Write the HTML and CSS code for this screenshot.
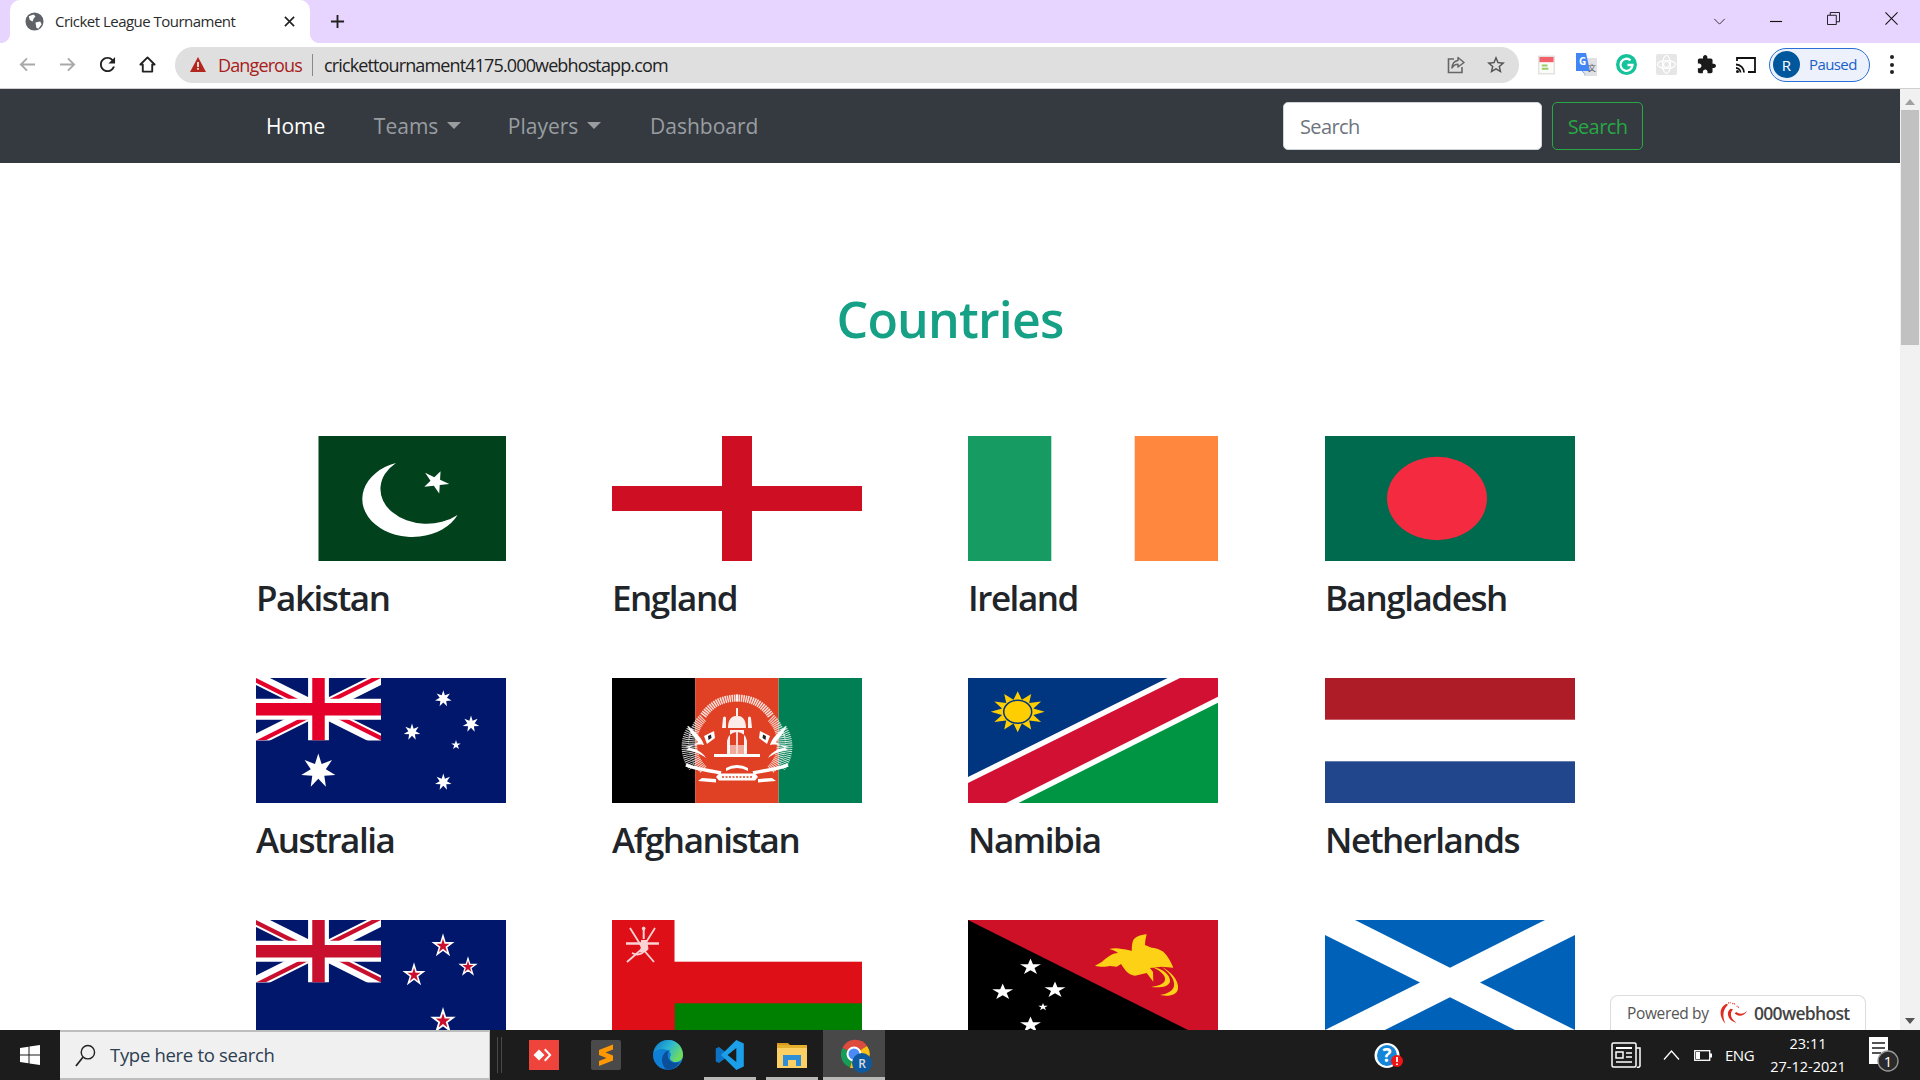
FILE: index.html
```html
<!DOCTYPE html>
<html lang="en">
<head>
<meta charset="utf-8">
<title>Cricket League Tournament</title>
<link rel="stylesheet" href="styles.css">
</head>
<body>
<svg class="defs" aria-hidden="true">
  <defs>
    <polygon id="s5" points="0,-1 .2245,-.309 .951,-.309 .363,.118 .588,.809 0,.382 -.588,.809 -.363,.118 -.951,-.309 -.2245,-.309"/>
    <polygon id="s7" points="0,-1 .191,-.396 .782,-.623 .429,-.098 .975,.223 .344,.275 .434,.901 0,.44 -.434,.901 -.344,.275 -.975,.223 -.429,-.098 -.782,-.623 -.191,-.396"/>
    <clipPath id="ujt"><path d="M30,15h30v15zv15h-30zh-30v-15zv-15h30z"/></clipPath>
    <filter id="soft" x="-5%" y="-5%" width="110%" height="110%"><feGaussianBlur stdDeviation=".35"/></filter>
    <symbol id="uj" viewBox="0 0 60 30" preserveAspectRatio="none">
      <path d="M0,0 60,30M60,0 0,30" stroke="#fff" stroke-width="6"/>
      <path d="M0,0 60,30M60,0 0,30" stroke="#e4002b" stroke-width="4" clip-path="url(#ujt)"/>
      <path d="M30,0v30M0,15h60" stroke="#fff" stroke-width="10"/>
      <path d="M30,0v30M0,15h60" stroke="#e4002b" stroke-width="6"/>
    </symbol>
    <symbol id="ujn" viewBox="0 0 60 30" preserveAspectRatio="none">
      <path d="M0,0 60,30M60,0 0,30" stroke="#fff" stroke-width="6"/>
      <path d="M0,0 60,30M60,0 0,30" stroke="#c8102e" stroke-width="4" clip-path="url(#ujt)"/>
      <path d="M30,0v30M0,15h60" stroke="#fff" stroke-width="10"/>
      <path d="M30,0v30M0,15h60" stroke="#c8102e" stroke-width="6"/>
    </symbol>
    <g id="emb-half">
      <path d="M126 20C108 20 98 28 91 38" fill="none" stroke="#fff" stroke-width="7" stroke-dasharray="1.500 .8" opacity=".85"/>
      <path d="M91 40C78 52 76 78 92 92" fill="none" stroke="#fff" stroke-width="9" stroke-dasharray="1.200 .8" opacity=".75"/>
      <path d="M79 50C71 60 71 78 80 90" fill="none" stroke="#fff" stroke-width="7" stroke-dasharray="1 1" opacity=".8"/>
      <path d="M75 48C84 54 90 60 92 67C86 66 80 67 73 69C82 70 90 73 94 80C88 75 78 72 74 72C78 69 84 66 86 64C82 59 78 54 75 48z" fill="#fff"/>
      <path d="M92 58 102 53 103 60 95 66z" fill="#fff"/>
      <path d="M96 58 99 56.500 99.500 60 96.500 62z" fill="#222"/>
      <path d="M74 87C86 92 98 92 109 95" fill="none" stroke="#fff" stroke-width="3.500"/>
      <path d="M86 103 104 104.500 104 101 90 100z" fill="#fff"/>
      <path d="M110 50h4V40a1.500 1.500 0 0 0-3 0z M108 52h10v24h-3V63a10 10 0 0 1 10-9v-2z" fill="#fff" opacity=".92"/>
      <path d="M124 54h2v22h-10v-9h8z" fill="#fff" opacity=".55"/>
      <path d="M124 38c-6 0-8 6-8 12h9V38zM124 30h1.500v8H124z" fill="#fff" opacity=".9"/>
      <path d="M102 76h23v3h-23z" fill="#fff"/>
      <path d="M114 90q5-3 11-3v3q-6 0-11 3z" fill="#fff"/>
    </g>
  </defs>
</svg>

<header class="chrome">
  <div class="tabstrip">
    <div class="tab">
      <svg class="globe" viewBox="0 0 20 20"><circle cx="10" cy="10" r="9.5" fill="#5f6368"/><path d="M4 4.5 9 2.5l2 2-2 2.5-1 3-3-1.5zM11 11l5-1 1.5 3-3.5 4.500-2-1z" fill="#fff"/></svg>
      <span class="tab-title">Cricket League Tournament</span>
      <svg class="tab-x" viewBox="0 0 12 12"><path d="M1 1l10 10M11 1 1 11" stroke="#222" stroke-width="1.800"/></svg>
    </div>
    <svg class="newtab" viewBox="0 0 16 16"><path d="M8 1v14M1 8h14" stroke="#222" stroke-width="2"/></svg>
    <div class="grow"></div>
    <svg class="win win-chev" viewBox="0 0 14 8"><path d="M1 1l6 6 6-6" fill="none" stroke="#333" stroke-width="1.100"/></svg>
    <svg class="win win-min" viewBox="0 0 14 14"><path d="M0 7h13" stroke="#111" stroke-width="1.200"/></svg>
    <svg class="win win-max" viewBox="0 0 14 14"><path d="M.5 3.500h9.500v10H.5zM3.500 3.500V.5h10v10H10" fill="none" stroke="#111" stroke-width="1"/></svg>
    <svg class="win win-close" viewBox="0 0 14 14"><path d="M.5.5l13 13M13.500.5l-13 13" stroke="#111" stroke-width="1.100"/></svg>
  </div>
  <div class="toolbar">
    <svg class="tb tb-back" viewBox="0 0 18 16"><path d="M17 8H2M8.500 1.500 2 8l6.500 6.500" fill="none" stroke="#a9a9a9" stroke-width="2"/></svg>
    <svg class="tb tb-fwd" viewBox="0 0 18 16"><path d="M1 8h15M9.500 1.500 16 8l-6.500 6.500" fill="none" stroke="#a9a9a9" stroke-width="2"/></svg>
    <svg class="tb tb-reload" viewBox="3 3 18 18"><path fill="#222" d="M17.650 6.350C16.200 4.900 14.210 4 12 4c-4.420 0-7.990 3.580-7.990 8s3.570 8 7.990 8c3.730 0 6.840-2.550 7.730-6h-2.080c-.82 2.330-3.040 4-5.650 4-3.310 0-6-2.690-6-6s2.690-6 6-6c1.660 0 3.140.69 4.220 1.780L13 11h7V4l-2.350 2.350z"/></svg>
    <svg class="tb tb-home" viewBox="0 0 18 18"><path d="M9 1.500 1.500 9H4v7.500h10V9h2.500z" fill="none" stroke="#222" stroke-width="2" stroke-linejoin="round"/></svg>
    <div class="omnibox">
      <svg class="warn" viewBox="0 0 16 15"><path d="M8 0 16 15H0z" fill="#b3261e"/><path d="M7.200 5h1.600v5H7.200zM7.200 11h1.600v1.800H7.200z" fill="#fff"/></svg>
      <span class="danger">Dangerous</span>
      <span class="omni-sep"></span>
      <span class="url">crickettournament4175.000webhostapp.com</span>
      <div class="grow"></div>
      <svg class="omni-i i-share" viewBox="0 0 18 18"><path d="M7 3H1.500v13.500H15V11" fill="none" stroke="#666" stroke-width="1.600"/><path d="M11 1.500 17 6.500 11 11V8.200C8 8.200 6.300 9.500 5 12c.2-4 2.500-7 6-7.500z" fill="none" stroke="#666" stroke-width="1.500" stroke-linejoin="round"/></svg>
      <svg class="omni-i i-star" viewBox="2 2 20 20"><path fill="#555" d="M22 9.240l-7.190-.62L12 2 9.190 8.630 2 9.240l5.460 4.730L5.820 21 12 17.270 18.180 21l-1.630-7.030L22 9.240zM12 15.400l-3.760 2.270 1-4.280-3.320-2.880 4.380-.38L12 6.100l1.710 4.040 4.380.38-3.320 2.880 1 4.280L12 15.400z"/></svg>
    </div>
    <svg class="ext ext-cal" viewBox="0 0 18 20"><rect width="18" height="20" fill="#e4e2de"/><rect x="1.500" y="1.500" width="15" height="17" fill="#fbfbf8"/><rect x="1.500" y="1.500" width="15" height="5.500" fill="#f2616a"/><path d="M4 10.500h6M4 14h7" stroke="#9ccc65" stroke-width="2.200"/></svg>
    <svg class="ext ext-tr" viewBox="0 0 21 24"><path d="M8 5h13v18H8z" fill="#dfe1e5"/><path d="M0 0h10l4 18H7l3 5-4-5H0z" fill="#4285f4"/><text class="ext-g" x="3" y="12">G</text><text class="ext-zh" x="12" y="18">文</text></svg>
    <svg class="ext ext-gr" viewBox="0 0 21 21"><circle cx="10.500" cy="10.500" r="10.500" fill="#15c39a"/><path d="M14.500 6.300A6 6 0 1 0 16.500 11h-5" fill="none" stroke="#fff" stroke-width="2.300"/></svg>
    <svg class="ext ext-gy" viewBox="0 0 21 21"><rect width="21" height="21" rx="2" fill="#e6e6e6"/><g fill="none" stroke="#fff" stroke-width="1.200"><circle cx="10.500" cy="10.500" r="3"/><ellipse cx="10.500" cy="10.500" rx="9" ry="4"/><ellipse cx="10.500" cy="10.500" rx="4" ry="9"/></g></svg>
    <svg class="ext ext-pz" viewBox="1 1 22 22"><path fill="#1a1a1a" d="M20.500 11H19V7c0-1.100-.9-2-2-2h-4V3.500C13 2.120 11.880 1 10.500 1S8 2.120 8 3.500V5H4c-1.100 0-1.990.9-1.990 2v3.800H3.500c1.490 0 2.700 1.210 2.700 2.700s-1.210 2.700-2.700 2.700H2V20c0 1.100.9 2 2 2h3.800v-1.500c0-1.490 1.210-2.700 2.700-2.700 1.490 0 2.700 1.210 2.700 2.700V22H17c1.100 0 2-.9 2-2v-4h1.500c1.380 0 2.500-1.120 2.500-2.500S21.880 11 20.500 11z"/></svg>
    <svg class="ext ext-cast" viewBox="0 0 20 16"><path d="M1 4V1h18v14h-7" fill="none" stroke="#111" stroke-width="1.800"/><path d="M0 7.500a8 8 0 0 1 8 8M0 11a4.500 4.500 0 0 1 4.500 4.500" fill="none" stroke="#111" stroke-width="1.800"/><circle cx="1.500" cy="14.500" r="1.500" fill="#111"/></svg>
    <div class="pill"><span class="avatar">R</span><span class="paused">Paused</span></div>
    <span class="kebab"><i></i><i></i><i></i></span>
  </div>
</header>

<div class="viewport">
  <div class="page">
    <nav class="navbar">
      <div class="nav-inner">
        <a class="nav-link active">Home</a>
        <a class="nav-link caret nl-teams">Teams</a>
        <a class="nav-link caret nl-players">Players</a>
        <a class="nav-link nl-dash">Dashboard</a>
        <form class="search">
          <input class="search-input" placeholder="Search">
          <button class="search-btn" type="button">Search</button>
        </form>
      </div>
    </nav>
    <main class="container">
      <h1 class="title">Countries</h1>
      <div class="grid">
        <article class="card">
          <svg class="flag" viewBox="0 0 250 125"><rect x="62.500" width="187.500" height="125" fill="#01411c"/><path d="M140 27A50 38 0 1 0 201.600 79A46 34.500 0 1 1 140 27z" fill="#fff"/><use href="#s5" fill="#fff" transform="translate(179.700 45.700) rotate(25) scale(14 11.500)"/></svg>
          <h2 class="name">Pakistan</h2>
        </article>
        <article class="card">
          <svg class="flag" viewBox="0 0 250 125"><path d="M110 0h30v50h110v25H140v50h-30V75H0V50h110z" fill="#ce0e22"/></svg>
          <h2 class="name">England</h2>
        </article>
        <article class="card">
          <svg class="flag" viewBox="0 0 250 125"><rect width="83.300" height="125" fill="#169b62"/><rect x="166.700" width="83.300" height="125" fill="#ff883e"/></svg>
          <h2 class="name">Ireland</h2>
        </article>
        <article class="card">
          <svg class="flag" viewBox="0 0 250 125"><rect width="250" height="125" fill="#006a4e"/><ellipse cx="112" cy="62.500" rx="50" ry="41.700" fill="#f42a41"/></svg>
          <h2 class="name">Bangladesh</h2>
        </article>

        <article class="card">
          <svg class="flag" viewBox="0 0 250 125"><rect width="250" height="125" fill="#00176b"/><use href="#uj" width="125" height="62.500"/><g fill="#fff"><use href="#s7" transform="translate(62.300 93) scale(17.500)"/><use href="#s7" transform="translate(187.300 20.700) scale(8.500)"/><use href="#s7" transform="translate(156 54) scale(8.500)"/><use href="#s7" transform="translate(215 46) scale(8.500)"/><use href="#s5" transform="translate(200 67) scale(5)"/><use href="#s7" transform="translate(187.300 104) scale(8.500)"/></g></svg>
          <h2 class="name">Australia</h2>
        </article>
        <article class="card">
          <svg class="flag" viewBox="0 0 250 125"><rect width="83.300" height="125"/><rect x="83.300" width="83.300" height="125" fill="#e04023"/><rect x="166.700" width="83.300" height="125" fill="#007f54"/>
            <g filter="url(#soft)">
              <use href="#emb-half"/>
              <use href="#emb-half" transform="translate(250 0) scale(-1 1)"/>
              <path d="M107 95.500h36l3 3.500-3 3.500h-36l-3-3.500z" fill="#fff"/>
              <path d="M110 99h30" stroke="#e04023" stroke-width="1.600" stroke-dasharray="2 1.500"/>
            </g>
          </svg>
          <h2 class="name">Afghanistan</h2>
        </article>
        <article class="card">
          <svg class="flag" viewBox="0 0 250 125"><path d="M0 0h199.600L0 99z" fill="#003580"/><path d="M212 0h38v18.700L38 125H0v-20z" fill="#d21034"/><path d="M250 24.700V125H50.500z" fill="#009543"/><polygon fill="#ffce00" transform="translate(49.700 33.700) scale(27 20.500)" points="0,-1 .155,-.58 .5,-.866 .424,-.424 .866,-.5 .58,-.155 1,0 .58,.155 .866,.5 .424,.424 .5,.866 .155,.58 0,1 -.155,.58 -.5,.866 -.424,.424 -.866,.5 -.58,.155 -1,0 -.58,-.155 -.866,-.5 -.424,-.424 -.5,-.866 -.155,-.58"/><ellipse cx="49.700" cy="33.700" rx="14" ry="11.500" fill="#ffce00" stroke="#003580" stroke-width="1.500"/></svg>
          <h2 class="name">Namibia</h2>
        </article>
        <article class="card">
          <svg class="flag" viewBox="0 0 250 125"><rect width="250" height="41.700" fill="#ae1c28"/><rect y="83.300" width="250" height="41.700" fill="#21468b"/></svg>
          <h2 class="name">Netherlands</h2>
        </article>

        <article class="card">
          <svg class="flag" viewBox="0 0 250 125"><rect width="250" height="125" fill="#00176b"/><use href="#ujn" width="125" height="62.500"/><g fill="#c8102e" stroke="#fff" stroke-width=".17"><use href="#s5" transform="translate(187 26) scale(9.500 10)"/><use href="#s5" transform="translate(158 55) scale(9.500 10)"/><use href="#s5" transform="translate(212 47) scale(8 8.500)"/><use href="#s5" transform="translate(187 101) scale(10.500 11)"/></g></svg>
          <h2 class="name">New Zealand</h2>
        </article>
        <article class="card">
          <svg class="flag" viewBox="0 0 250 125"><rect width="250" height="83.300" y="41.700" fill="#de0f17"/><rect x="62.500" y="83.300" width="187.500" height="41.700" fill="#008000"/><rect width="62.500" height="125" fill="#de0f17"/>
            <g filter="url(#soft)" fill="none" stroke="#fbd3d5"><path d="M18 8 33 32M43 8 28 32" stroke-width="1.800"/><path d="M14 23.500h33" stroke-width="2.500"/><path d="M15 42 31 28M42 42 30 28" stroke-width="1.800"/><path d="M31.700 9v10" stroke-width="2"/><circle cx="31.700" cy="8.500" r="1.400" fill="#fbd3d5"/><path d="M29 20h6l1.500 9c-2 3-5 3.500-8 3z" fill="#fbd3d5" stroke="none"/><path d="M20 33Q28 37 33 30" stroke-width="1.800"/></g></svg>
          <h2 class="name">Oman</h2>
        </article>
        <article class="card">
          <svg class="flag" viewBox="0 0 250 125"><rect width="250" height="125" fill="#ce1126"/><path d="M0 0 250 125H0z"/><g fill="#fff"><use href="#s5" transform="translate(62.500 47) scale(11 8.500)"/><use href="#s5" transform="translate(34.700 72) scale(11 8.500)"/><use href="#s5" transform="translate(87 70) scale(11 8.500)"/><use href="#s5" transform="translate(75 87) scale(5 4)"/><use href="#s5" transform="translate(62.500 105) scale(11 8.500)"/></g>
            <path d="M178.700 14.300C172 15 167 17 165.300 20C163.500 24 164 28 163.700 31C161 30 157 29 153.700 29C150 28 145 28 141.300 29C145 30 148 31 150 33C144 33 140 37 136 40C133 43 130 44 127 45.700C130 46.500 134 47 137 46.700L142 46L148.700 46.700L153 44C155 47 157 50 158.700 51.700C161 54 164 55.500 167 55.700L178.700 53L185.300 61.700L185 52L182 48L193.700 46.700L205.300 47.700C203 42 200 36 195.300 31.700C191 29 187 28 183.700 27.700L177 25C177 21 178 17 178.700 14.300z" fill="#fcd116"/>
            <path d="M184 47C194 48 203 55 202 62C200 67 192 68 183 67C190 66 196 64 197 60C198 55 191 50 184 47zM194 47C203 52 211 60 210 69C209 75 201 77 192 75C199 74 205 71 206 66C207 58 200 52 194 47z" fill="#fcd116"/></svg>
          <h2 class="name">Papua New Guinea</h2>
        </article>
        <article class="card">
          <svg class="flag" viewBox="0 0 250 125"><rect width="250" height="125" fill="#fff"/><path d="M30 0h190l-95 47.700zM0 15l95 47.500L0 110zM250 15l-95 47.500L250 110zM125 77.300 220 125H30z" fill="#0061b8"/></svg>
          <h2 class="name">Scotland</h2>
        </article>
      </div>
    </main>
    <aside class="badge">
      <span class="badge-txt">Powered by</span>
      <svg class="badge-logo" viewBox="0 0 87 66"><g fill="#e02b20"><path d="M25 5C5 15 0 40 22 65C12 40 15 22 30 8z"/><path d="M38 20C24 28 26 55 55 62C38 50 34 35 45 22z"/><path d="M55 30C65 38 78 36 87 26C80 42 60 46 50 34z"/></g><path d="M30 3l9-1M43 4l10 3M56 12l8 5" stroke="#e02b20" stroke-width="3.500" stroke-dasharray="3 2" fill="none"/></svg>
      <span class="badge-brand">000webhost</span>
    </aside>
  </div>
  <div class="scrollbar">
    <span class="sb-up"></span>
    <span class="sb-thumb"></span>
    <span class="grow"></span>
    <span class="sb-down"></span>
  </div>
</div>

<footer class="taskbar">
  <div class="start"><svg class="winlogo" viewBox="0 0 20 20"><path d="M0 3l8.500-1.200V9.500H0zM9.500 1.600 20 0v9.500H9.500zM0 10.500h8.500v7.700L0 17zM9.500 10.500H20V20L9.500 18.400z" fill="#fff"/></svg></div>
  <div class="ts-search">
    <svg class="ts-glass" viewBox="0 0 22 24"><circle cx="13.500" cy="8.500" r="7" fill="none" stroke="#222" stroke-width="1.500"/><path d="M8.500 13.500 1 23" stroke="#222" stroke-width="1.800"/></svg>
    <span class="ts-text">Type here to search</span>
  </div>
  <div class="ts-div"></div>
  <div class="task">
    <svg class="t-ic" viewBox="0 0 30 30"><rect width="30" height="30" fill="#ef443b"/><path d="M10 9.500 15.500 15 10 20.500 4.500 15z" fill="#fff"/><path d="M16.500 8.500l6 6.500-6 6.500 -1.500-1.500 4.800-5-4.800-5z" fill="#fff"/></svg>
  </div>
  <div class="task">
    <svg class="t-ic" viewBox="0 0 30 30"><rect width="30" height="30" rx="2" fill="#4a4a4a"/><path d="M8 12.500 22 7v5l-7.500 3L22 18v5L8 28.500v-5l7.500-3L8 17.500z" transform="translate(0 -2.500)" fill="#ff9800"/></svg>
  </div>
  <div class="task">
    <svg class="t-ic" viewBox="0 0 30 30"><defs><linearGradient id="edg" x1="0" y1="0" x2="1" y2=".5"><stop offset="0" stop-color="#0d74c6"/><stop offset=".55" stop-color="#2bb6d4"/><stop offset="1" stop-color="#6fdc5f"/></linearGradient></defs><circle cx="15" cy="15" r="15" fill="#0f7fd6"/><path d="M.5 13C2 5 8 0 15.500 0 24 0 30 7 30 15c0 4-3 7-7 7-4 0-6-2-6-4.500 0-1 .5-1.500 1-2.500 0-3-4-6-8.500-6C5 9 2 11 .5 13z" fill="url(#edg)"/><path d="M9 20c0-5 3-9 8-10-2 2-3 4-2 7 1 5 7 7 12 5-3 5-8 8-13 8-3-2-5-6-5-10z" fill="#0b4f9a"/></svg>
  </div>
  <div class="task under">
    <svg class="t-ic" viewBox="0 0 100 100"><path d="M71 0 96 12V88L71 100 32 62 13 76 3 71V29L13 24 32 38zM71 27 42 50 71 73z" fill="#1a9fe8" fill-rule="evenodd"/><path d="M32 38 13 24 3 29V71L13 76 32 62 20 50z" fill="#0e72c4"/></svg>
  </div>
  <div class="task under">
    <svg class="t-ic" viewBox="0 0 30 30"><path d="M0 3h11l3 3h-14z" fill="#d99a1c"/><rect y="5" width="30" height="23" fill="#fcd062"/><rect y="5" width="30" height="3" fill="#e8ae2e"/><path d="M6 26V15h18v11h-5v-6h-8v6z" fill="#2f8fd6"/></svg>
  </div>
  <div class="task under active">
    <svg class="t-ic t-chrome" viewBox="0 0 34 34"><path d="M15 15 3.500 9A14 14 0 0 1 28 7z" fill="#dd4b3e"/><path d="M15 15 3.500 9A14 14 0 0 0 11 28.500z" fill="#169d58"/><path d="M15 15 28 7A14 14 0 0 1 15 29H11z" fill="#fbc013"/><circle cx="15" cy="15" r="6.500" fill="#4a8bf5" stroke="#fff" stroke-width="2"/><circle cx="23" cy="24" r="10" fill="#0d5aa0"/><text class="t-r" x="23" y="29">R</text></svg>
  </div>
  <div class="grow"></div>
  <svg class="tray-help" viewBox="0 0 29 25"><ellipse cx="13" cy="12.500" rx="12.500" ry="12.500" fill="#fff"/><ellipse cx="13" cy="12.500" rx="10" ry="10.500" fill="#1585d8"/><text class="help-q" x="13" y="19">?</text><circle cx="23" cy="18" r="6" fill="#f01414"/><path d="M23 14v5M23 20.500v1.500" stroke="#fff" stroke-width="1.800"/></svg>
  <svg class="tray-news" viewBox="0 0 30 26"><rect x="1" y="1" width="24" height="24" rx="1.500" fill="none" stroke="#fff" stroke-width="1.500"/><path d="M25 6h4v18a2 2 0 0 1-3 1" fill="none" stroke="#fff" stroke-width="1.500"/><path d="M5 6h16" stroke="#fff" stroke-width="2"/><rect x="5" y="10" width="7" height="6" fill="none" stroke="#fff" stroke-width="1.500"/><path d="M15 11h6M15 15h6M5 20h16" stroke="#fff" stroke-width="1.500"/></svg>
  <svg class="tray-up" viewBox="0 0 17 10"><path d="M1 9.500 8.500 1 16 9.500" fill="none" stroke="#fff" stroke-width="1.300"/></svg>
  <svg class="tray-bat" viewBox="0 0 18 11"><rect x=".7" y=".7" width="15" height="9.600" fill="none" stroke="#fff" stroke-width="1.300"/><rect x="2" y="2" width="4" height="7" fill="#fff"/><rect x="16" y="3.500" width="2" height="4" fill="#fff"/></svg>
  <span class="tray-eng">ENG</span>
  <div class="clock"><span>23:11</span><span>27-12-2021</span></div>
  <svg class="tray-notif" viewBox="0 0 30 36"><path d="M0 1h19v22l-5 5H0z" fill="#fff" transform="translate(0 -1)"/><path d="M3 6h13M3 11h13M3 16h9" stroke="#1c1c1c" stroke-width="1.600"/><circle cx="19" cy="24" r="10" fill="#2a2a2a" stroke="#999" stroke-width="1.300"/><text class="notif-n" x="19" y="30">1</text></svg>
</footer>
</body>
</html>
```

FILE: styles.css
```css
* { box-sizing: border-box; }
html, body { margin: 0; height: 100%; }
body {
  width: 1920px; height: 1080px; overflow: hidden;
  display: flex; flex-direction: column;
  font-family: "Open Sans", "Noto Sans", "Liberation Sans", sans-serif;
  background: #fff; color: #212529;
}
.defs { position: absolute; width: 0; height: 0; }
.grow { flex: 1 1 auto; }
svg { display: block; flex: none; }

/* browser chrome */
.tabstrip { height: 43px; background: #e8d5ff; display: flex; align-items: center; position: relative; }
.tab {
  width: 300px; height: 43px; margin-left: 10px; background: #fff;
  border-radius: 10px 10px 0 0; display: flex; align-items: center;
  padding-left: 15px; position: relative;
}
.tab::before, .tab::after { content: ""; position: absolute; bottom: 0; width: 10px; height: 10px; }
.tab::before { left: -10px; background: radial-gradient(circle at 0 0, transparent 10px, #fff 10.500px); }
.tab::after { right: -10px; background: radial-gradient(circle at 100% 0, transparent 10px, #fff 10.500px); }
.globe { width: 19px; height: 19px; }
.tab-title { margin-left: 11px; margin-bottom: 2px; font-size: 15px; width: 230px; white-space: nowrap; color: #2b2b2b; letter-spacing: -.52px; }
.tab-x { width: 11px; height: 11px; margin-left: -1px; }
.newtab { width: 15px; height: 15px; margin-left: 20px; }
.win-chev { width: 13px; height: 7px; margin-right: 44px; }
.win-min { width: 13px; height: 13px; margin-right: 44px; }
.win-max { width: 13px; height: 13px; margin-right: 45px; margin-top: -6px; }
.win-close { width: 13px; height: 13px; margin-right: 22px; margin-top: -6px; }

.toolbar { height: 46px; background: #fff; border-bottom: 1px solid #d0d0d0; display: flex; align-items: center; padding: 0 0 2px 19px; }
.tb { height: 17px; }
.tb-back { width: 17px; }
.tb-fwd { width: 17px; margin-left: 23px; }
.tb-reload { width: 17px; margin-left: 23px; }
.tb-home { width: 17px; margin-left: 23px; }
.omnibox {
  width: 1344px; height: 36px; margin-left: 19px; border-radius: 18px; background: #dfdfdf;
  display: flex; align-items: center; padding-left: 15px; padding-right: 14px;
}
.warn { width: 16px; height: 15px; }
.danger { margin-left: 12px; font-size: 18px; color: #a8201a; letter-spacing: -.87px; white-space: nowrap; width: 83px; }
.omni-sep { width: 1px; height: 22px; background: #888; margin-left: 11px; }
.url { margin-left: 11px; font-size: 18px; color: #222; letter-spacing: -.87px; white-space: nowrap; }
.omni-i { width: 18px; height: 18px; }
.i-star { margin-left: 22px; }
.ext { height: 21px; }
.ext-cal { width: 17px; height: 20px; margin-left: 19px; }
.ext-tr { width: 21px; height: 24px; margin-left: 21px; }
.ext-gr { width: 21px; margin-left: 19px; }
.ext-gy { width: 21px; margin-left: 19px; }
.ext-pz { width: 19px; margin-left: 20px; }
.ext-cast { width: 20px; height: 16px; margin-left: 20px; }
.ext-g { font-size: 10px; fill: #fff; font-weight: 700; }
.ext-zh { font-size: 8px; fill: #555; font-family: "Noto Sans CJK SC", sans-serif; }
.pill {
  width: 101px; height: 34px; margin-left: 13px; border: 1.500px solid #2a6fd6; border-radius: 17px;
  background: #ecf1fb; display: flex; align-items: center; padding-left: 3px;
}
.avatar { width: 27px; height: 27px; border-radius: 50%; background: #01579b; color: #fff; font-size: 15px; display: flex; align-items: center; justify-content: center; }
.paused { margin-left: 9px; margin-top: -1px; font-size: 15px; color: #1a5fc8; letter-spacing: -.6px; }
.kebab { margin-left: 20px; display: flex; flex-direction: column; gap: 3.500px; }
.kebab i { width: 4px; height: 4px; border-radius: 50%; background: #222; display: block; }

/* viewport */
.viewport { flex: 1 1 auto; min-height: 0; display: flex; }
.page { flex: 1 1 auto; min-width: 0; position: relative; overflow: hidden; background: #fff; }
.scrollbar { width: 20px; background: #f1f1f1; display: flex; flex-direction: column; align-items: center; }
.sb-up { width: 0; height: 0; margin: 10px 0 5px; border: 5px solid transparent; border-top: 0; border-bottom: 6px solid #a0a0a0; }
.sb-thumb { width: 18px; height: 235px; background: #c1c1c1; }
.sb-down { width: 0; height: 0; margin: 7px 0 6px; border: 5px solid transparent; border-bottom: 0; border-top: 6px solid #555; }

.navbar { height: 74px; background: #343a40; display: flex; }
.nav-inner { width: 1425px; margin: 0 auto; padding: 0 19.500px 0 28.500px; display: flex; align-items: center; }
.nav-link { font-size: 21px; color: #9a9da0; white-space: nowrap; margin-top: -1px; }
.nav-link.active { color: #fff; }
.caret { display: flex; align-items: center; }
.caret::after { content: ""; margin-left: 9px; border: 7px solid transparent; border-top: 7px solid #9a9da0; border-bottom: 0; }
.nl-teams { margin-left: 48.500px; }
.nl-players { margin-left: 46.500px; }
.nl-dash { margin-left: 48.700px; }
.search { margin-left: auto; display: flex; gap: 10px; }
.search-input {
  width: 259px; height: 48px; border: 1px solid #ced4da; border-radius: 5px; background: #fff;
  padding: 0 16px; font: 20px "Open Sans", sans-serif; letter-spacing: -.6px; outline: 0;
}
.search-input::placeholder { color: #6c757d; opacity: 1; }
.search-btn {
  width: 91px; height: 48px; border: 1px solid #28a745; border-radius: 5px; background: transparent;
  color: #28a745; font: 20px "Open Sans", sans-serif; letter-spacing: -.6px; padding: 0;
}

.container { width: 1425px; margin: 0 auto; padding: 126px 0 0 18.500px; }
.title { margin: 0 0 87px -18.500px; text-align: center; font-size: 50px; line-height: 60px; font-weight: 600; color: #16a085; letter-spacing: -.8px; }
.grid { display: grid; grid-template-columns: 356px 356px 357px 356px; row-gap: 59px; }
.flag { width: 250px; height: 125px; }
.name { margin: 16px 0 0; font-size: 35px; line-height: 42px; font-weight: 600; color: #212529; letter-spacing: -1.450px; white-space: nowrap; }

.badge {
  position: absolute; left: 1610px; bottom: 0; width: 256px; height: 35px;
  background: #fff; border: 1px solid #ddd; border-bottom: 0; border-radius: 8px 8px 0 0;
  display: flex; align-items: center; padding-left: 16px;
}
.badge-txt { font-size: 15.500px; color: #555; letter-spacing: -.35px; width: 91px; white-space: nowrap; }
.badge-logo { width: 29px; height: 24px; }
.badge-brand { margin-left: 7px; font-size: 17.500px; font-weight: 600; color: #444; letter-spacing: -.7px; white-space: nowrap; }

/* taskbar */
.taskbar { height: 50px; background: #1c1c1c; display: flex; align-items: center; color: #fff; flex: none; }
.start { width: 60px; display: flex; justify-content: center; }
.winlogo { width: 20px; height: 20px; }
.ts-search {
  width: 430px; height: 50px; background: #f0f0f0; border-top: 2px solid #bdbdbd; border-bottom: 2px solid #bdbdbd; border-right: 1px solid #bdbdbd;
  display: flex; align-items: center; padding-left: 15px;
}
.ts-glass { width: 21px; height: 23px; }
.ts-text { margin-left: 14px; margin-bottom: 2px; font-size: 18.500px; color: #2c3e50; letter-spacing: -.3px; white-space: nowrap; }
.ts-div { width: 23px; height: 36px; position: relative; }
.ts-div::before { content: ""; position: absolute; left: 7px; top: 0; width: 3px; height: 36px; border-left: 1px solid #4a4a4a; border-right: 1px solid #4a4a4a; }
.task { width: 62px; height: 50px; display: flex; align-items: center; justify-content: center; position: relative; }
.task.under::after { content: ""; position: absolute; left: 5px; right: 5px; bottom: 0; height: 3px; background: #b8b8b4; }
.task.active { background: #484848; }
.task.active::after { left: 0; right: 0; }
.t-ic { width: 30px; height: 30px; }
.t-chrome { width: 34px; height: 34px; margin-left: 3px; margin-top: 2px; }
.t-r { font-size: 12px; fill: #ddd; text-anchor: middle; font-weight: 600; }
.tray-help { width: 29px; height: 25px; margin-right: 208px; }
.help-q { font-size: 19px; fill: #fff; font-weight: 700; text-anchor: middle; }
.tray-news { width: 30px; height: 26px; margin-right: 22px; }
.tray-up { width: 17px; height: 10px; margin-right: 14px; }
.tray-bat { width: 18px; height: 11px; margin-right: 13px; }
.tray-eng { width: 45.500px; font-size: 15px; letter-spacing: -.5px; white-space: nowrap; }
.clock { width: 75px; display: flex; flex-direction: column; align-items: center; gap: 3px; font-size: 14.500px; line-height: 20px; white-space: nowrap; }
.tray-notif { width: 30px; height: 36px; margin-left: 23.500px; margin-right: 21px; }
.notif-n { font-size: 15px; fill: #fff; text-anchor: middle; }
```
